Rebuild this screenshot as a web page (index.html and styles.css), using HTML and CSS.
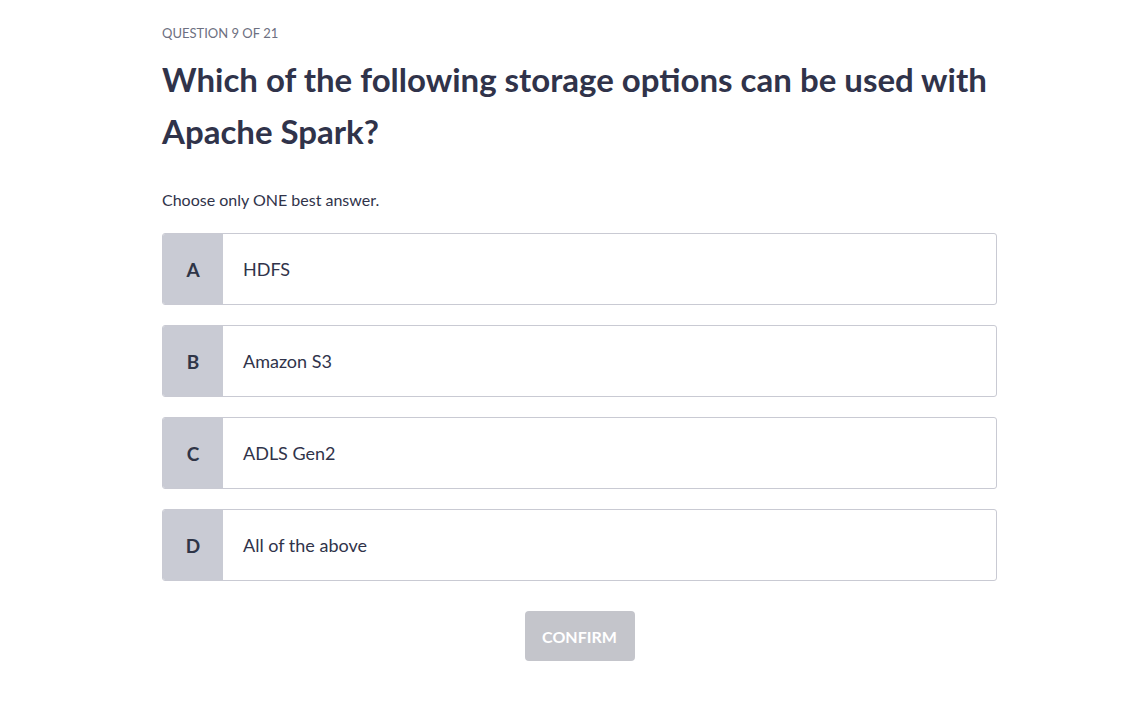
FILE: index.html
```html
<!DOCTYPE html>
<html>
<head>
<meta charset="utf-8">
<link rel="stylesheet" href="styles.css">
</head>
<body>
<main class="quiz">
  <div class="counter">QUESTION 9 OF 21</div>
  <h1 class="question">Which of the following storage options can be used with Apache Spark?</h1>
  <p class="hint">Choose only ONE best answer.</p>
  <ul class="options">
    <li class="option"><span class="letter">A</span><span class="text">HDFS</span></li>
    <li class="option"><span class="letter">B</span><span class="text">Amazon S3</span></li>
    <li class="option"><span class="letter">C</span><span class="text">ADLS Gen2</span></li>
    <li class="option"><span class="letter">D</span><span class="text">All of the above</span></li>
  </ul>
  <div class="actions"><button class="confirm" disabled>CONFIRM</button></div>
</main>
</body>
</html>
```
FILE: styles.css
```css
* { box-sizing: border-box; }
body {
  margin: 0;
  background: #fff;
  font-family: Lato, "Open Sans", sans-serif;
  color: #2f3347;
}
.quiz {
  width: 835px;
  margin-left: 162px;
  padding-top: 24px;
}
.counter {
  font-size: 13px;
  line-height: 18px;
  color: #6d7081;
}
.question {
  margin: 11px 0 0;
  font-size: 33px;
  line-height: 52px;
  font-weight: 700;
  color: #30334a;
}
.hint {
  margin: 33px 0 0;
  font-size: 16px;
  line-height: 20px;
  color: #30334a;
}
.options {
  list-style: none;
  margin: 23px 0 0;
  padding: 0;
  display: flex;
  flex-direction: column;
  gap: 20px;
}
.option {
  display: flex;
  height: 72px;
  border: 1px solid #c9cad3;
  border-radius: 3px;
  overflow: hidden;
}
.letter {
  width: 60px;
  flex: none;
  background: #c9cbd4;
  display: flex;
  align-items: center;
  justify-content: center;
  font-weight: 700;
  font-size: 19px;
  color: #2f3547;
}
.text {
  display: flex;
  align-items: center;
  padding-left: 20px;
  font-size: 18px;
  color: #30334a;
}
.actions {
  display: flex;
  justify-content: center;
  margin-top: 30px;
}
.confirm {
  width: 110px;
  height: 50px;
  border: none;
  border-radius: 4px;
  background: #c4c5cb;
  color: #fff;
  font-family: inherit;
  font-weight: 700;
  font-size: 16px;
}
```
